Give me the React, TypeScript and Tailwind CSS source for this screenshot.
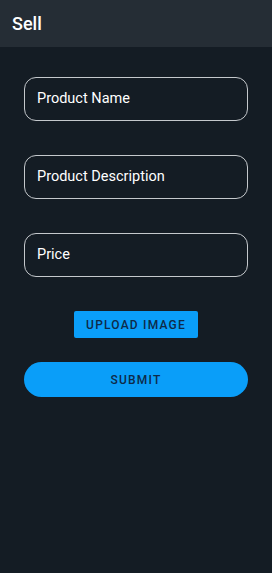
export default function App() {
  const fields = ["Product Name", "Product Description", "Price"];

  return (
    <div
      className="flex min-h-[573px] w-[272px] flex-col bg-[#141c24]"
      style={{ fontFamily: "Roboto, 'Liberation Sans', sans-serif" }}
    >
      <header className="flex h-[47px] items-center bg-[#252d35] px-3">
        <h1 className="text-[18px] font-medium text-white">Sell</h1>
      </header>

      <div className="flex flex-col px-6 pt-[30px]">
        <div className="flex flex-col gap-[34px]">
          {fields.map((label) => (
            <div
              key={label}
              className="flex h-[44px] items-center rounded-[12px] border border-[#c4c8cc] px-3 text-[14.5px] text-white"
            >
              {label}
            </div>
          ))}
        </div>

        <div className="mt-[34px] flex justify-center">
          <button className="h-[27px] w-[124px] rounded-[2px] bg-[#0a9ef9] text-[12px] font-medium tracking-[1.2px] text-[#0e2a48]">
            UPLOAD IMAGE
          </button>
        </div>

        <button className="mt-[24px] h-[35px] w-full rounded-full bg-[#0a9ef9] text-[12px] font-medium tracking-[1.2px] text-[#0e2a48]">
          SUBMIT
        </button>
      </div>
    </div>
  );
}
